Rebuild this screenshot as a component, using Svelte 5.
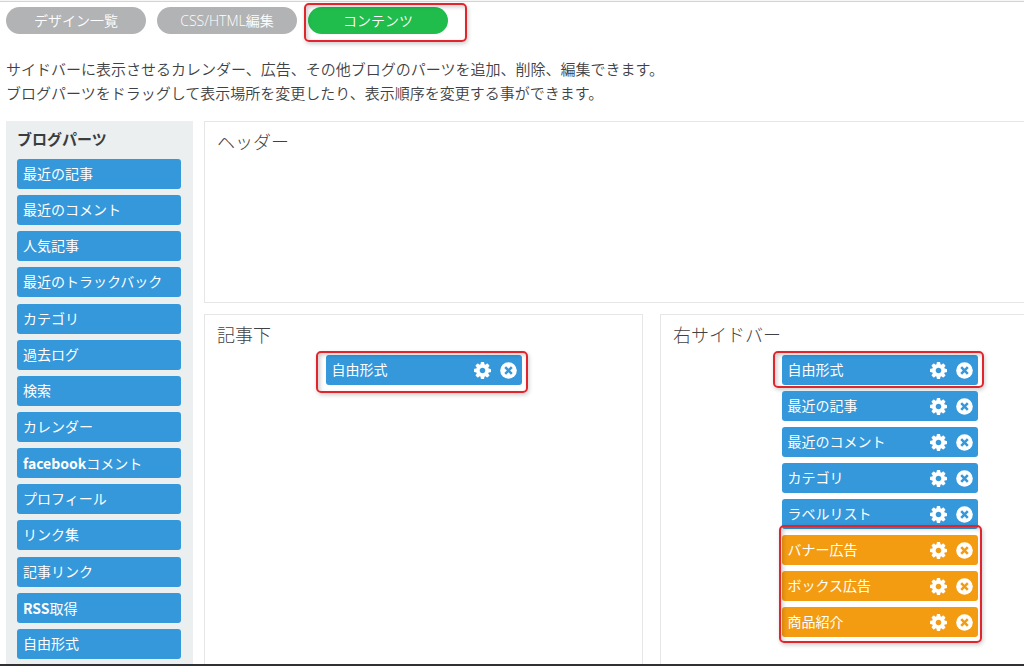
<script>
  const tabs = [
    { label: 'デザイン一覧', active: false },
    { label: 'CSS/HTML編集', active: false },
    { label: 'コンテンツ', active: true }
  ];

  const parts = [
    { label: '最近の記事' },
    { label: '最近のコメント' },
    { label: '人気記事' },
    { label: '最近のトラックバック' },
    { label: 'カテゴリ' },
    { label: '過去ログ' },
    { label: '検索' },
    { label: 'カレンダー' },
    { latin: 'facebook', label: 'コメント' },
    { label: 'プロフィール' },
    { label: 'リンク集' },
    { label: '記事リンク' },
    { latin: 'RSS', label: '取得' },
    { label: '自由形式' }
  ];

  const below = [{ label: '自由形式', mark: 'loose' }];

  const right = [
    { label: '自由形式', mark: 'tight' },
    { label: '最近の記事' },
    { label: '最近のコメント' },
    { label: 'カテゴリ' },
    { label: 'ラベルリスト' }
  ];

  const ads = [{ label: 'バナー広告' }, { label: 'ボックス広告' }, { label: '商品紹介' }];
</script>

{#snippet widget(item, ad)}
  <li class="part placed" class:ad>
    <span class="name">{item.label}</span>
    <button class="icon" type="button" aria-label="設定">
      <svg viewBox="0 0 1536 1536"><path fill="currentColor" d="M1024 768q0-106-75-181t-181-75-181 75-75 181 75 181 181 75 181-75 75-181zm512-109v222q0 12-8 23t-20 13l-185 28q-19 54-39 91 35 50 107 138 10 12 10 25t-9 23q-27 37-99 108t-94 71q-12 0-26-9l-138-108q-44 23-91 38-16 136-29 186-7 28-36 28h-222q-14 0-24.5-8.5t-11.5-21.5l-28-184q-49-16-90-37l-141 107q-10 9-25 9-14 0-25-11-126-114-165-168-7-10-7-23 0-12 8-23 15-21 51-66.5t54-70.5q-27-50-41-99l-183-27q-13-2-21-12.5t-8-23.5v-222q0-12 8-23t19-13l186-28q14-46 39-92-40-57-107-138-10-12-10-24 0-10 9-23 26-36 98.5-107.5t94.5-71.5q13 0 26 10l138 107q44-23 91-38 16-136 29-186 7-28 36-28h222q14 0 24.5 8.5t11.5 21.5l28 184q49 16 90 37l142-107q9-9 24-9 13 0 25 10 129 119 165 170 7 8 7 22 0 12-8 23-15 21-51 66.5t-54 70.5q26 50 41 98l183 28q13 2 21 12.5t8 23.5z" /></svg>
    </button>
    <button class="icon" type="button" aria-label="削除">
      <svg viewBox="0 0 17 17"><circle cx="8.5" cy="8.5" r="8.3" fill="currentColor" /><path class="cross" d="M5.2 5.2l6.6 6.6M11.8 5.2l-6.6 6.6" /></svg>
    </button>
    {#if item.mark}<span class="mark {item.mark}"></span>{/if}
  </li>
{/snippet}

<div class="page">
  <nav class="tabs">
    {#each tabs as tab}
      <span class="tab">
        <button type="button" class:active={tab.active}>{tab.label}</button>
        {#if tab.active}<span class="mark wide"></span>{/if}
      </span>
    {/each}
  </nav>

  <p class="intro">
    サイドバーに表示させるカレンダー、広告、その他ブログのパーツを追加、削除、編集できます。<br />
    ブログパーツをドラッグして表示場所を変更したり、表示順序を変更する事ができます。
  </p>

  <main class="work">
    <aside class="palette">
      <h2>ブログパーツ</h2>
      <ul>
        {#each parts as part}
          <li class="part">{#if part.latin}<b>{part.latin}</b>{/if}{part.label}</li>
        {/each}
      </ul>
    </aside>

    <div class="board">
      <section class="panel header"><h3>ヘッダー</h3></section>
      <section class="panel open">
        <h3>記事下</h3>
        <ul>
          {#each below as item}{@render widget(item, false)}{/each}
        </ul>
      </section>
      <section class="panel open">
        <h3>右サイドバー</h3>
        <ul>
          {#each right as item}{@render widget(item, false)}{/each}
        </ul>
        <ul class="ads">
          {#each ads as item}{@render widget(item, true)}{/each}
          <li class="mark group" aria-hidden="true"></li>
        </ul>
      </section>
    </div>
  </main>
</div>

<style>
  :global(body) {
    background: #fff;
    overflow-x: hidden;
  }
  .page {
    box-sizing: border-box;
    min-width: 1099px;
    min-height: 100vh;
    display: flex;
    flex-direction: column;
    padding-left: 6px;
    border-bottom: 2px solid #303136;
    background: linear-gradient(#f6f6f6 1px, #d4d4d4 1px, #d4d4d4 2px, #fff 2px);
    color: #3f4245;
    font-family: 'Open Sans', 'Noto Sans CJK JP', sans-serif;
    font-size: 15px;
    font-weight: 350;
  }
  ul {
    list-style: none;
    margin: 0;
    padding: 0;
    display: flex;
    flex-direction: column;
    gap: 6px;
  }
  h2,
  h3,
  p {
    margin: 0;
  }
  button {
    border: 0;
    padding: 0;
    font: inherit;
    color: #fff;
    cursor: pointer;
  }
  .tabs {
    display: flex;
    gap: 11px;
    padding-top: 7px;
  }
  .tab {
    position: relative;
    display: flex;
  }
  .tab button {
    width: 140px;
    height: 27px;
    border-radius: 14px;
    background: #b2b3b5;
    font-size: 14px;
    line-height: 27px;
  }
  .tab button.active {
    background: #20bd4c;
  }
  .intro {
    margin-top: 23px;
    line-height: 24px;
  }
  .work {
    flex: 1;
    display: flex;
    gap: 11px;
    margin-top: 16px;
  }
  .palette {
    box-sizing: border-box;
    width: 187px;
    display: flex;
    flex-direction: column;
    padding: 6px 12px 5px 11px;
    background: #ebefef;
  }
  .palette h2 {
    font-size: 15px;
    line-height: 24px;
    font-weight: 700;
    color: #3a3d40;
  }
  .palette ul {
    flex: 1;
    justify-content: space-between;
    margin-top: 8px;
  }
  .part {
    position: relative;
    box-sizing: border-box;
    height: 30px;
    padding: 0 6px;
    border-radius: 3px;
    background: #3498db;
    color: #fff;
    font-size: 14px;
    font-weight: 400;
    line-height: 30px;
    white-space: nowrap;
  }
  .part b {
    font-family: 'Noto Sans CJK JP', sans-serif;
    font-weight: 700;
  }
  .part.ad {
    background: #f39c12;
  }
  .placed {
    display: flex;
    align-items: center;
    gap: 9px;
    padding-right: 5px;
  }
  .name {
    flex: 1;
  }
  .icon {
    width: 17px;
    height: 17px;
    background: none;
  }
  .icon svg {
    display: block;
    width: 17px;
    height: 17px;
  }
  .cross {
    fill: none;
    stroke: #3498db;
    stroke-width: 2.5;
  }
  .ad .cross {
    stroke: #f39c12;
  }
  .board {
    flex: 1;
    display: grid;
    grid-template-columns: 1fr 1fr;
    grid-template-rows: auto 1fr;
    gap: 11px 17px;
  }
  .panel {
    box-sizing: border-box;
    border: 1px solid #e6e6e6;
    background: #fff;
  }
  .panel h3 {
    padding: 6px 12px;
    font-size: 18px;
    line-height: 28px;
    font-weight: 300;
  }
  .header {
    grid-column: 1 / -1;
    min-height: 182px;
  }
  .open {
    border-bottom: 0;
  }
  .panel ul {
    position: relative;
    width: 196px;
    margin: 0 auto;
  }
  .panel .ads {
    margin-top: 6px;
  }
  .mark {
    position: absolute;
    border: 2px solid #e0262c;
    border-radius: 5px;
    box-shadow: 1px 2px 4px rgb(0 0 0 / 20%), inset 2px 2px 4px rgb(0 0 0 / 20%);
    pointer-events: none;
  }
  .mark.wide {
    inset: -4px -19px -8px -4px;
  }
  .mark.loose {
    inset: -4px -6px -8px -10px;
  }
  .mark.tight {
    inset: -4px -6px -3px -9px;
  }
  .mark.group {
    inset: -10px -4px -6px -3px;
  }
</style>
